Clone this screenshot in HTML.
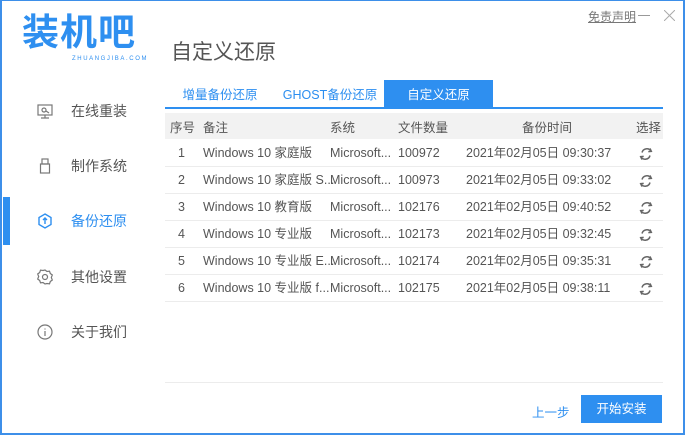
<!DOCTYPE html>
<html><head><meta charset="utf-8"><style>
*{margin:0;padding:0;box-sizing:border-box}
body{width:685px;height:435px;overflow:hidden;background:#fff;font-family:"Liberation Sans","Noto Sans CJK SC",sans-serif;position:relative}
.frame{position:absolute;left:0;top:0;width:685px;height:435px;border:2px solid #3d8fe9;border-top-width:1px}
.abs{position:absolute;white-space:nowrap}
.nav{position:absolute;left:71px;font-size:14px;color:#555;line-height:18px}
.ico{position:absolute;left:36px}
.tab{position:absolute;top:80px;height:28px;line-height:30px;font-size:12.5px;color:#2b8ef0;text-align:center}
.row{position:absolute;left:165px;width:498px;height:27px;border-bottom:1px solid #ececec;font-size:12.5px;color:#555}
.row span{position:absolute;top:0;line-height:27px;height:27px}
.row svg{position:absolute;left:474px;top:7px}
</style></head><body>
<div class="frame"></div>
<div class="abs" style="left:22px;top:13px;font-size:37px;font-weight:bold;color:#2e8ff0;letter-spacing:1px;line-height:40px">装机吧</div>
<div class="abs" style="left:72px;top:56px;font-size:6px;color:#2e8ff0;letter-spacing:1.6px">ZHUANGJIBA.COM</div>
<div class="abs" style="left:171px;top:36px;font-size:21px;color:#555">自定义还原</div>
<div class="abs" style="left:588px;top:8px;font-size:12px;color:#777;text-decoration:underline">免责声明</div>
<div class="abs" style="left:638px;top:15px;width:12px;height:1px;background:#999"></div>
<svg class="abs" style="left:664px;top:10px" width="11" height="11" viewBox="0 0 11 11" stroke="#aaa" stroke-width="1"><path d="M0 0L11 11M11 0L0 11"/></svg>

<div class="abs" style="left:3px;top:197px;width:7px;height:48px;background:#2e8ff0"></div>
<svg class="ico" style="top:102px" width="18" height="18" viewBox="0 0 18 18" fill="none" stroke="#777" stroke-width="1.2"><rect x="2" y="3" width="14" height="10"/><path d="M9 13v3M5 16h8"/><circle cx="8" cy="8" r="2"/><path d="M10 9l3 2"/></svg>
<div class="nav" style="top:102px">在线重装</div>
<svg class="ico" style="top:157px" width="18" height="18" viewBox="0 0 18 18" fill="none" stroke="#777" stroke-width="1.2"><rect x="6" y="2" width="6" height="5"/><rect x="4.5" y="7" width="9" height="9"/></svg>
<div class="nav" style="top:157px">制作系统</div>
<svg class="ico" style="top:212px" width="18" height="18" viewBox="0 0 18 18" fill="none" stroke="#2e8ff0" stroke-width="1.4"><path d="M9 2l6 3.5v7L9 16l-6-3.5v-7z"/><path d="M7 8l2-2 2 2M9 6v6"/></svg>
<div class="nav" style="top:212px;color:#2e8ff0">备份还原</div>
<svg class="ico" style="top:268px" width="18" height="18" viewBox="0 0 18 18" fill="none" stroke="#777" stroke-width="1.2"><path d="M9 2l2 1.5 2.5-.3.8 2.3 2 1.5-1 2.5 1 2.5-2 1.5-.8 2.3-2.5-.3L9 16l-2-1.5-2.5.3-.8-2.3-2-1.5 1-2.5-1-2.5 2-1.5.8-2.3 2.5.3z"/><circle cx="9" cy="9" r="2.5"/></svg>
<div class="nav" style="top:268px">其他设置</div>
<svg class="ico" style="top:323px" width="18" height="18" viewBox="0 0 18 18" fill="none" stroke="#777" stroke-width="1.2"><circle cx="9" cy="9" r="7"/><path d="M9 8v5M9 5.5v1"/></svg>
<div class="nav" style="top:323px">关于我们</div>

<div class="tab" style="left:170px;width:100px">增量备份还原</div>
<div class="tab" style="left:280px;width:100px">GHOST备份还原</div>
<div class="tab" style="left:384px;width:109px;background:#2e8ff0;color:#fff">自定义还原</div>
<div class="abs" style="left:165px;top:107px;width:498px;height:2px;background:#2e8ff0"></div>

<svg width="0" height="0" style="position:absolute"><defs><g id="r" fill="none" stroke="#666" stroke-width="1.5"><path d="M3 5.5A5 5 0 0 1 12 4"/><path d="M11 1.5l1.3 2.8-3 .3"/><path d="M11 8.5A5 5 0 0 1 2 10"/><path d="M3 12.5L1.7 9.7l3-.3"/></g></defs></svg>

<div class="row" style="top:113px;background:#f2f2f2;border:none;height:26px"><span style="left:5px;line-height:30px">序号</span><span style="left:38px;line-height:30px">备注</span><span style="left:165px;line-height:30px">系统</span><span style="left:233px;line-height:30px">文件数量</span><span style="left:357px;line-height:30px">备份时间</span><span style="left:471px;line-height:30px">选择</span></div>
<div class="row" style="top:140px"><span style="left:13px">1</span><span style="left:38px">Windows 10 家庭版</span><span style="left:165px">Microsoft...</span><span style="left:233px">100972</span><span style="left:301px">2021年02月05日 09:30:37</span><svg width="14" height="14"><use href="#r"/></svg></div>
<div class="row" style="top:167px"><span style="left:13px">2</span><span style="left:38px">Windows 10 家庭版 S...</span><span style="left:165px">Microsoft...</span><span style="left:233px">100973</span><span style="left:301px">2021年02月05日 09:33:02</span><svg width="14" height="14"><use href="#r"/></svg></div>
<div class="row" style="top:194px"><span style="left:13px">3</span><span style="left:38px">Windows 10 教育版</span><span style="left:165px">Microsoft...</span><span style="left:233px">102176</span><span style="left:301px">2021年02月05日 09:40:52</span><svg width="14" height="14"><use href="#r"/></svg></div>
<div class="row" style="top:221px"><span style="left:13px">4</span><span style="left:38px">Windows 10 专业版</span><span style="left:165px">Microsoft...</span><span style="left:233px">102173</span><span style="left:301px">2021年02月05日 09:32:45</span><svg width="14" height="14"><use href="#r"/></svg></div>
<div class="row" style="top:248px"><span style="left:13px">5</span><span style="left:38px">Windows 10 专业版 E...</span><span style="left:165px">Microsoft...</span><span style="left:233px">102174</span><span style="left:301px">2021年02月05日 09:35:31</span><svg width="14" height="14"><use href="#r"/></svg></div>
<div class="row" style="top:275px"><span style="left:13px">6</span><span style="left:38px">Windows 10 专业版 f...</span><span style="left:165px">Microsoft...</span><span style="left:233px">102175</span><span style="left:301px">2021年02月05日 09:38:11</span><svg width="14" height="14"><use href="#r"/></svg></div>

<div class="abs" style="left:165px;top:382px;width:498px;height:1px;background:#ececec"></div>
<div class="abs" style="left:532px;top:402px;font-size:12.5px;color:#2e8ff0">上一步</div>
<div class="abs" style="left:581px;top:395px;width:81px;height:28px;background:#2e8ff0;color:#fff;font-size:12.5px;line-height:28px;text-align:center">开始安装</div>
</body></html>
